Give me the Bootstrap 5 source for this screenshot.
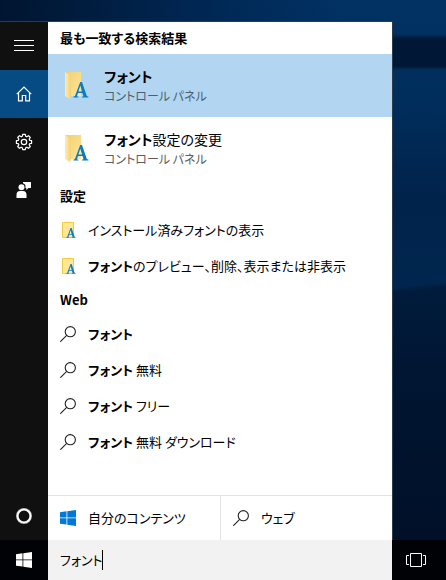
<!DOCTYPE html>
<html lang="ja">
<head>
<meta charset="utf-8">
<meta name="viewport" content="width=device-width, initial-scale=1">
<title>検索</title>
<link href="https://cdn.jsdelivr.net/npm/bootstrap@5.3.0/dist/css/bootstrap.min.css" rel="stylesheet">
<style>
body {
  font-family: "Noto Sans CJK JP", sans-serif;
  font-size: 13px;
  line-height: 20px;
  color: #000;
  background:
    linear-gradient(174deg, transparent 0 327px, rgba(0, 12, 32, .4) 332px) no-repeat,
    linear-gradient(transparent 34px, #001735 39px 66px, transparent 70px) no-repeat right / 54px 100%,
    linear-gradient(90deg, #001530 0, rgba(0, 32, 74, .6) 200px, transparent 340px) no-repeat 0 0 / 100% 22px,
    linear-gradient(#003263 0, #002e5c 100px, #00234b 200px, #00264f 290px, #001c3e 380px, #00132e 540px);
}
body, button, input { font-feature-settings: "palt"; }
button { border: 0; background: none; color: inherit; padding: 0; text-align: left; }
svg { display: block; flex: none; }
.search-panel { margin: 21px 53px 0 0; border: solid #2a3d50; border-width: 1px 1px 0 0; }
.rail { width: 48px; background: #101010; color: #fff; }
.rail-btn { height: 48px; width: 48px; }
.rail-btn.active { background: #064b83; }
.group-title { font-size: 13px; font-weight: 700; line-height: 32px; padding-left: 12px; margin: 0; }
.best { height: 63px; padding-left: 17px; gap: 11px; font-size: 14px; }
.best.active { background: #b2d6f2; }
.best small { font-size: 12px; color: #5c5c5c; line-height: 20px; }
.best.active small { color: #4b5f70; }
.hit { height: 36px; padding-left: 12px; gap: 12px; }
.scope { border-top: 1px solid #e3e3e3; height: 45px; }
.scope-btn { padding-left: 12px; gap: 12px; }
.scope-btn + .scope-btn { border-left: 1px solid #e3e3e3; }
.mine { width: 50%; }
.taskbar { height: 40px; background: #000205; color: #fff; }
.start { width: 48px; }
.views { width: 54px; padding-left: 14px; }
.query { background: #f2f2f2; }
.query input { border: 0; outline: 0; background: none; padding: 0 12px; color: #000; }
.caret { left: 54px; top: 10px; width: 1px; height: 20px; background: #000; }
</style>
<script src="https://cdn.jsdelivr.net/npm/bootstrap@5.3.0/dist/js/bootstrap.bundle.min.js"></script>
</head>
<body class="d-flex flex-column min-vh-100">
<svg class="position-absolute" width="0" height="0" aria-hidden="true">
  <linearGradient id="gold" x1="0" x2="1" y2="1"><stop stop-color="#efcf70"/><stop offset="1" stop-color="#ffe69b"/></linearGradient>
  <linearGradient id="flap" x1="0" x2="1"><stop stop-color="#ffedb3"/><stop offset="1" stop-color="#f3d071"/></linearGradient>
  <symbol id="glyph-a" viewBox="0 0 16 16">
    <path fill="#0a7cc4" fill-rule="evenodd" d="M7.200 0h1.800l4.800 14 1.700.8v.8H9v-.8l1.500-.5-1.100-3.400H5L3.900 14.200l1.500.6v.8H.4v-.8L2 14zM7.300 3.600 5.400 9.600h3.600z"/>
  </symbol>
  <symbol id="folder-lg" viewBox="0 0 24 28">
    <path fill="url(#gold)" d="M0 0h16v24H5z"/>
    <path fill="url(#flap)" d="M0 0l6 4v19l-1 4-5-3z"/>
    <use href="#glyph-a" x="8" y="10" width="16" height="16"/>
  </symbol>
  <symbol id="folder-sm" viewBox="0 0 16 16">
    <path fill="#ffe699" stroke="#f3cb3c" d="M2.500.5h11v15h-11z"/>
    <use href="#glyph-a" x="6" y="6" width="10" height="10"/>
  </symbol>
  <symbol id="lens" viewBox="0 0 16 16">
    <g fill="none" stroke="#222" stroke-width="1.100"><circle cx="10.300" cy="5.700" r="5.100"/><path d="M6.700 9.300.3 15.700"/></g>
  </symbol>
  <symbol id="win" viewBox="0 0 16 16">
    <path fill="currentColor" d="M0 2.200 6.500 1.300v6.200H0zM7.300 1.200 16 0v7.500H7.300zM0 8.300h6.500v6.200L0 13.700zM7.300 8.300H16V16l-8.700-1.300z"/>
  </symbol>
</svg>

<main class="search-panel d-flex flex-grow-1">
  <nav class="rail d-flex flex-column flex-shrink-0" aria-label="メニュー">
    <button class="rail-btn d-flex align-items-center justify-content-center" aria-label="メニュー">
      <svg width="20" height="12" stroke="#fff"><path d="M0 .5h20M0 5.500h20M0 10.500h20"/></svg>
    </button>
    <button class="rail-btn active d-flex align-items-center justify-content-center" aria-label="ホーム">
      <svg width="16" height="16" fill="none" stroke="#fff" stroke-width="1.200"><path d="M.8 8.200 8 1l7.200 7.200M2.500 7v7.800h3.800V9.500h3.400v5.300h3.800V7"/></svg>
    </button>
    <button class="rail-btn d-flex align-items-center justify-content-center" aria-label="設定">
      <svg width="18" height="18" viewBox="-9 -9 18 18" fill="none" stroke="#fff" stroke-width="1.200" stroke-linejoin="round">
        <path d="M-1.300-7.600H1.300L1.700-5.700 2.800-5.200 4.500-6.300 6.300-4.500 5.200-2.800 5.700-1.700 7.600-1.300V1.300L5.700 1.700 5.200 2.800 6.300 4.500 4.500 6.300 2.800 5.200 1.700 5.700 1.300 7.600H-1.300L-1.700 5.700-2.800 5.200-4.500 6.300-6.300 4.500-5.200 2.800-5.700 1.700-7.600 1.300V-1.300L-5.700-1.700-5.200-2.800-6.300-4.500-4.500-6.300-2.800-5.200-1.700-5.700z"/><circle r="2.700"/>
      </svg>
    </button>
    <button class="rail-btn d-flex align-items-center justify-content-center" aria-label="フィードバック">
      <svg width="16" height="16" fill="#fff"><circle cx="5.500" cy="5.200" r="3"/><path d="M.5 16v-3.200Q.5 9 4 9h3q3.500 0 3.500 3.800V16zM7 0h8v6h-2.500L10.300 8V6H9.500V3.500Q8.800 1.800 7 1.300z"/></svg>
    </button>
    <button class="rail-btn mt-auto d-flex align-items-center justify-content-center" aria-label="Cortana">
      <svg width="16" height="16" fill="none"><circle cx="8" cy="8" r="6.700" stroke="#aaa" stroke-width="2.600"/><circle cx="8" cy="8" r="6.500" stroke="#fff" stroke-width="1.700"/></svg>
    </button>
  </nav>

  <div class="d-flex flex-column flex-grow-1 bg-white">
    <h2 class="group-title">最も一致する検索結果</h2>
    <button class="best active d-flex align-items-center">
      <svg width="28" height="28"><use href="#folder-lg" width="24" height="28"/></svg>
      <span class="d-flex flex-column"><b>フォント</b><small>コントロール パネル</small></span>
    </button>
    <button class="best d-flex align-items-center">
      <svg width="28" height="28"><use href="#folder-lg" width="24" height="28"/></svg>
      <span class="d-flex flex-column"><span><b>フォント</b>設定の変更</span><small>コントロール パネル</small></span>
    </button>
    <h2 class="group-title">設定</h2>
    <button class="hit d-flex align-items-center"><svg width="16" height="16"><use href="#folder-sm"/></svg><span>インストール済みフォントの表示</span></button>
    <button class="hit d-flex align-items-center"><svg width="16" height="16"><use href="#folder-sm"/></svg><span><b>フォント</b>のプレビュー、削除、表示または非表示</span></button>
    <h2 class="group-title">Web</h2>
    <button class="hit d-flex align-items-center"><svg width="16" height="16"><use href="#lens"/></svg><b>フォント</b></button>
    <button class="hit d-flex align-items-center"><svg width="16" height="16"><use href="#lens"/></svg><span><b>フォント</b> 無料</span></button>
    <button class="hit d-flex align-items-center"><svg width="16" height="16"><use href="#lens"/></svg><span><b>フォント</b> フリー</span></button>
    <button class="hit d-flex align-items-center"><svg width="16" height="16"><use href="#lens"/></svg><span><b>フォント</b> 無料 ダウンロード</span></button>
    <div class="scope d-flex mt-auto">
      <button class="scope-btn mine d-flex align-items-center"><svg width="16" height="16" color="#0078d7"><use href="#win"/></svg>自分のコンテンツ</button>
      <button class="scope-btn flex-grow-1 d-flex align-items-center"><svg width="16" height="16"><use href="#lens"/></svg>ウェブ</button>
    </div>
  </div>
</main>

<footer class="taskbar d-flex">
  <button class="start d-flex align-items-center justify-content-center" aria-label="スタート"><svg width="16" height="16"><use href="#win"/></svg></button>
  <div class="query position-relative flex-grow-1 d-flex">
    <input class="w-100" type="text" value="フォント" aria-label="検索">
    <span class="caret position-absolute"></span>
  </div>
  <button class="views d-flex align-items-center" aria-label="タスク ビュー">
    <svg width="20" height="14" fill="none" stroke="#fff"><path d="M4.500.5h11v13h-11zM3 2.500H.5v9H3M17 2.500h2.500v9H17"/></svg>
  </button>
</footer>
</body>
</html>
